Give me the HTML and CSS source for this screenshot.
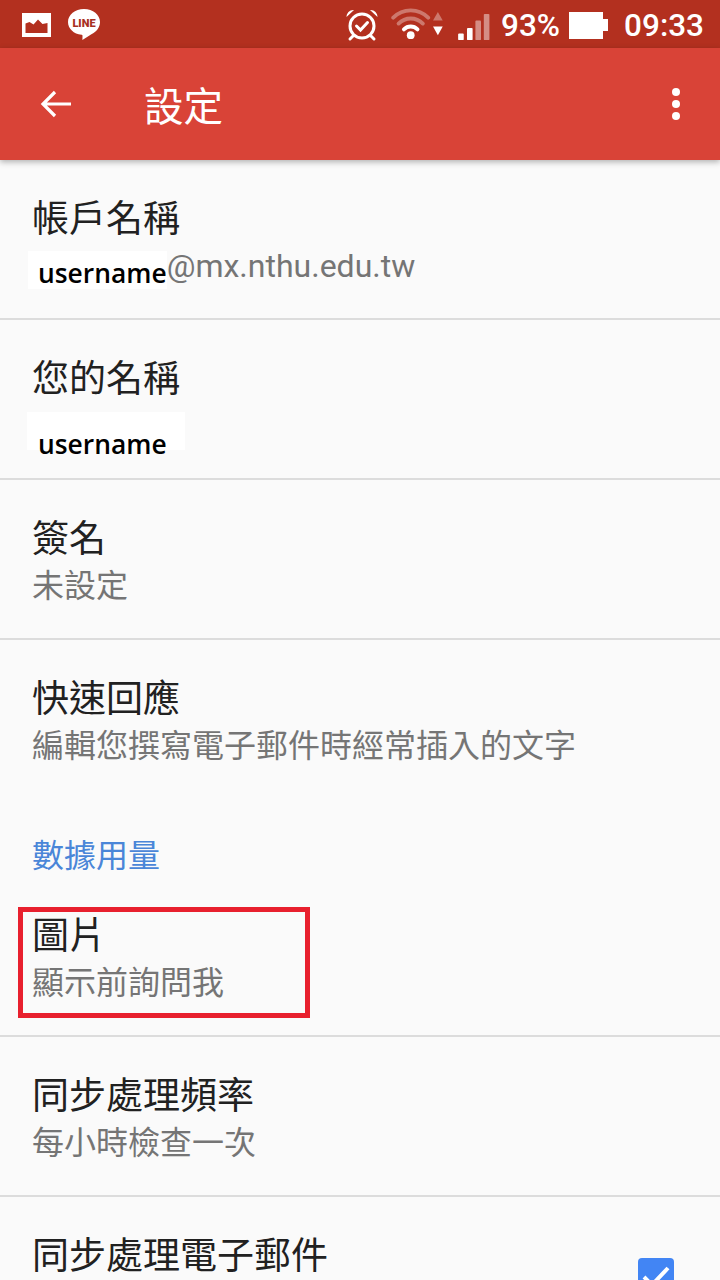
FILE: index.html
```html
<!DOCTYPE html>
<html lang="zh-Hant">
<head>
<meta charset="utf-8">
<title>設定</title>
<link rel="stylesheet" href="styles.css">
</head>
<body>
<div class="screen">
  <header class="status">
    <div class="status-left">
      <svg class="ic-mail" viewBox="0 0 29 24"><rect width="29" height="24" fill="#fff"/><path d="M3.500 20V10.500l4-1.500 4 2.500 4.500-5 4.500 4.500 5-1V20z" fill="#b3301f"/></svg>
      <svg class="ic-line" viewBox="0 0 32 31"><path d="M16 0C7 0 0 5.700 0 13c0 6.600 5.800 12 13.500 12.800.5.100 1 .4 1 1l-.1 4.200 9-5.800C28.500 22.700 32 18.300 32 13 32 5.700 25 0 16 0z" fill="#fff"/><text x="16" y="17.500" class="line-text" text-anchor="middle">LINE</text></svg>
    </div>
    <div class="status-right">
      <svg class="ic-alarm" viewBox="0 0 34 34"><g fill="none" stroke="#fff" stroke-linecap="round"><circle cx="17" cy="18" r="12" stroke-width="3"/><path d="M11.500 18l4 4 7-7.500" stroke-width="3"/><path d="M8 28l-3 3M26 28l3 3" stroke-width="3"/></g><path d="M1.500 9C1.500 5 5 1.500 9 2zM32.500 9c0-4-3.500-7.500-7.500-7z" fill="#fff"/></svg>
      <svg class="ic-wifi" viewBox="0 0 54 34"><g fill="none" stroke="#fff" stroke-linecap="round" stroke-width="4"><path d="M2 10C12 0 28 0 38 10" opacity=".35"/><path d="M7.500 16c7-7 18-7 25 0" opacity=".35"/><path d="M13 22c4-4 10-4 14 0"/></g><circle cx="20" cy="28" r="4" fill="#fff"/><path d="M43 13l5-9 5 9z" fill="#fff" opacity=".35"/><path d="M43 19l5 9 5-9z" fill="#fff"/></svg>
      <svg class="ic-signal" viewBox="0 0 34 30"><rect y="22" width="6" height="7" rx="1" fill="#fff"/><rect x="9.500" y="16" width="6" height="13" rx="1" fill="#fff"/><rect x="18.500" y="8" width="6" height="21" rx="1" fill="#fff" opacity=".45"/><rect x="27.500" y="1" width="6" height="28" rx="1" fill="#fff" opacity=".45"/></svg>
      <span class="pct">93%</span>
      <svg class="ic-batt" viewBox="0 0 39 27"><path d="M0 0h34v7h5v12h-5v8H0z" fill="#fff"/></svg>
      <span class="clock">09:33</span>
    </div>
  </header>

  <nav class="appbar">
    <svg class="ic-back" viewBox="0 0 32 32"><path d="M31 16H3M15 4L3 16l12 12" fill="none" stroke="#fff" stroke-width="3.200"/></svg>
    <h1 class="appbar-title">設定</h1>
    <svg class="ic-more" viewBox="0 0 8 32"><circle cx="4" cy="4" r="4" fill="#fff"/><circle cx="4" cy="16" r="4" fill="#fff"/><circle cx="4" cy="28" r="4" fill="#fff"/></svg>
  </nav>

  <main class="list">
    <section class="row">
      <div class="title">帳戶名稱</div>
      <div class="sub sub-account"><span class="mask mask-first">username</span>@mx.nthu.edu.tw</div>
    </section>
    <section class="row">
      <div class="title">您的名稱</div>
      <div class="sub sub-name"><span class="mask mask-second">username</span></div>
    </section>
    <section class="row">
      <div class="title">簽名</div>
      <div class="sub">未設定</div>
    </section>
    <section class="row row-plain">
      <div class="title">快速回應</div>
      <div class="sub">編輯您撰寫電子郵件時經常插入的文字</div>
    </section>
    <div class="section-head">數據用量</div>
    <section class="row row-marked">
      <div class="title">圖片</div>
      <div class="sub">顯示前詢問我</div>
      <div class="highlight"></div>
    </section>
    <section class="row">
      <div class="title">同步處理頻率</div>
      <div class="sub">每小時檢查一次</div>
    </section>
    <section class="row row-check">
      <div class="title">同步處理電子郵件</div>
      <svg class="checkbox" viewBox="0 0 36 36"><rect width="36" height="36" rx="4" fill="#4285f4"/><path d="M6 19l8 8L30 10" fill="none" stroke="#fff" stroke-width="4"/></svg>
    </section>
  </main>
</div>
</body>
</html>
```
FILE: styles.css
```css
* { box-sizing: border-box; }
html, body { margin: 0; padding: 0; }
body {
  width: 720px;
  height: 1280px;
  overflow: hidden;
  background: #fafafa;
  font-family: "Noto Sans CJK TC", Roboto, sans-serif;
}
.screen { width: 720px; height: 1280px; overflow: hidden; display: flex; flex-direction: column; }

.status {
  flex: none;
  height: 48px;
  background: #b3301f;
  display: flex;
  align-items: center;
  justify-content: space-between;
  padding: 0 16px 0 22px;
  color: #fff;
  font-family: Roboto, sans-serif;
}
.status-left, .status-right { display: flex; align-items: center; }
.ic-mail { width: 29px; height: 24px; margin-top: 2px; }
.ic-line { width: 32px; height: 31px; margin-left: 17px; }
.line-text { font: 900 11px Roboto, sans-serif; fill: #a8301f; }
.ic-alarm { width: 34px; height: 34px; margin-top: 2px; }
.ic-wifi { width: 53px; height: 33px; margin-left: 12px; }
.ic-signal { width: 32px; height: 28px; margin-left: 14px; margin-top: 6px; }
.pct { font-size: 31.500px; font-weight: 500; margin-left: 11px; line-height: 48px; padding-top: 4px; }
.ic-batt { width: 39px; height: 27px; margin-left: 9px; margin-top: 2px; }
.clock { font-size: 31.500px; font-weight: 500; margin-left: 16px; line-height: 48px; padding-top: 4px; }

.appbar {
  flex: none;
  position: relative;
  z-index: 1;
  height: 112px;
  background: #d94337;
  box-shadow: 0 2px 6px rgba(0,0,0,.3);
  display: flex;
  align-items: center;
  padding: 0 40px;
}
.ic-back { width: 32px; height: 32px; flex: none; }
.appbar-title {
  margin: 0 0 0 72px;
  font-size: 39.500px;
  font-weight: 400;
  color: #fff;
  line-height: 1;
  flex: 1;
}
.ic-more { width: 8px; height: 32px; flex: none; }

.list { flex: none; }
.row {
  position: relative;
  height: 160px;
  padding: 31px 32px 0;
  border-bottom: 2px solid #dcdcdc;
}
.row-plain { border-bottom: 0; }
.row-check { height: 200px; border-bottom: 0; }
.title {
  font-size: 37px;
  line-height: 50px;
  height: 49px;
  color: #212121;
}
.sub {
  font-size: 32px;
  line-height: 46px;
  color: #757575;
  white-space: nowrap;
}
.sub-account { font-family: Roboto, sans-serif; display: flex; align-items: center; margin-left: -4px; margin-top: 3px; }
.sub-name { display: flex; margin-left: -5px; }
.mask {
  background: #fff;
  color: #000;
  font-family: "Open Sans", sans-serif;
  font-size: 26.400px;
  font-weight: 600;
  line-height: 30px;
}
.mask-first { margin-top: 8px; padding: 7px 0 0 10px; height: 38px; }
.mask-second { margin-top: 12px; padding: 17px 0 0 11px; width: 158px; height: 38px; }
.section-head {
  height: 77px;
  padding: 34px 32px 0;
  font-size: 32px;
  line-height: 38px;
  color: #4a86d8;
}
.highlight {
  position: absolute;
  left: 18px;
  top: 30px;
  width: 292px;
  height: 111px;
  border: 5px solid #e8202e;
}
.checkbox {
  position: absolute;
  left: 638px;
  top: 61px;
  width: 36px;
  height: 36px;
}
```
